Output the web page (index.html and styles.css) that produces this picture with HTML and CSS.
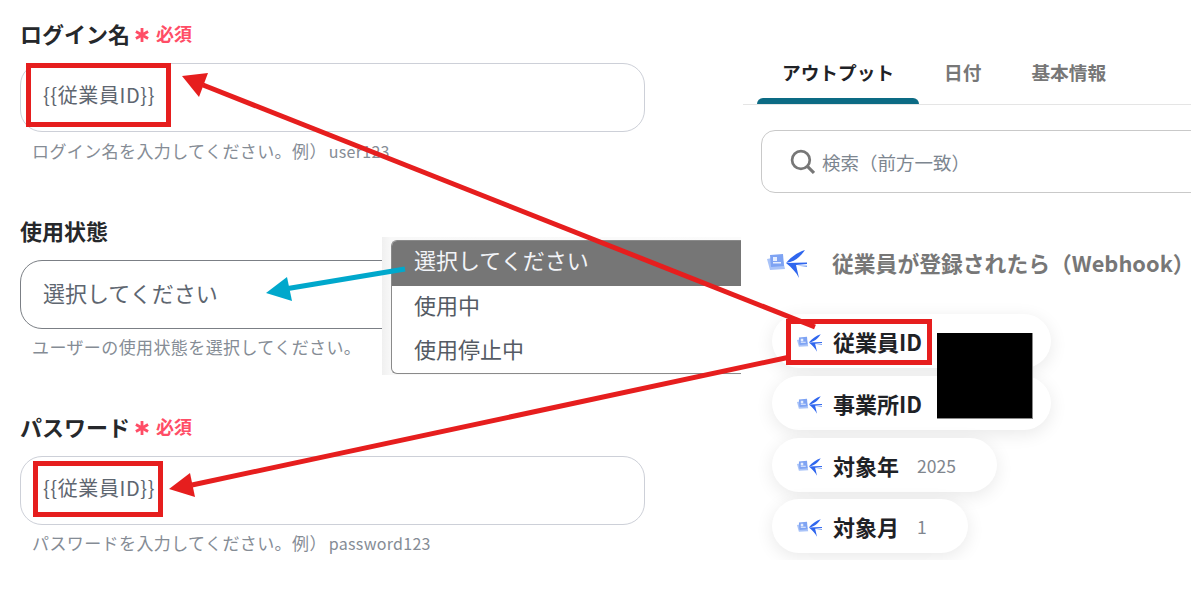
FILE: index.html
```html
<!DOCTYPE html>
<html lang="ja">
<head>
<meta charset="utf-8">
<title>従業員ID マッピング</title>
<link rel="stylesheet" href="styles.css">
</head>
<body>
<svg class="defs" width="0" height="0" aria-hidden="true">
  <symbol id="bird" viewBox="0 0 40 28">
    <path d="M0 9 15 6 18 19 3 20Z" fill="#a9c3f8"/>
    <path d="M3 5 16 4 17 16 4 17Z" fill="#7ea3f3"/>
    <path d="M6 7h4v4H6zM6 12h8v1.500H6z" fill="#e6eefe"/>
    <path d="M38 0C31 2 24 7 19 13 25 12 29 10 32 7 34 5 36 3 38 0Z" fill="#2f66ee"/>
    <path d="M19 13 40 12.500 40 14 29 15 32 28C29 22 25 18 19 13Z" fill="#2f66ee"/>
    <path d="M30 15.500 40 17 40 15.500Z" fill="#7ea3f3"/>
  </symbol>
  <symbol id="star" viewBox="0 0 15 15">
    <path d="M7.500 0V15M1 3.700 14 11.300M14 3.700 1 11.300" stroke="#ff4d66" stroke-width="3" fill="none"/>
  </symbol>
</svg>
<main class="page">
  <section class="form">
    <div class="field">
      <div class="label">ログイン名<span class="req"><svg class="star"><use href="#star"/></svg>必須</span></div>
      <div class="input">{{従業員ID}}</div>
      <p class="hint">ログイン名を入力してください。例）<span class="latin">user123</span></p>
    </div>
    <div class="field mid">
      <div class="label">使用状態</div>
      <div class="input select">選択してください</div>
      <p class="hint">ユーザーの使用状態を選択してください。</p>
    </div>
    <div class="field last">
      <div class="label">パスワード<span class="req"><svg class="star"><use href="#star"/></svg>必須</span></div>
      <div class="input">{{従業員ID}}</div>
      <p class="hint">パスワードを入力してください。例）<span class="latin">password123</span></p>
    </div>
  </section>
  <section class="output">
    <nav class="tabs">
      <span class="tab active">アウトプット</span>
      <span class="tab">日付</span>
      <span class="tab">基本情報</span>
    </nav>
    <div class="search">
      <svg class="search-icon" viewBox="0 0 24 24" width="25" height="25"><circle cx="10.500" cy="10.500" r="8.500" fill="none" stroke="#777" stroke-width="2.600"/><path d="M16.500 16.500 23 23" stroke="#777" stroke-width="3" fill="none"/></svg>
      <span>検索（前方一致）</span>
    </div>
    <h2 class="trigger"><svg class="icon-lg"><use href="#bird"/></svg><span class="trigger-text">従業員が登録されたら（Webhook<span class="half">）</span></span></h2>
    <ul class="pills">
      <li class="pill wide"><svg class="icon-sm"><use href="#bird"/></svg><b>従業員ID</b></li>
      <li class="pill wide"><svg class="icon-sm"><use href="#bird"/></svg><b>事業所ID</b></li>
      <li class="pill"><svg class="icon-sm"><use href="#bird"/></svg><b>対象年</b><span class="val">2025</span></li>
      <li class="pill"><svg class="icon-sm"><use href="#bird"/></svg><b>対象月</b><span class="val">1</span></li>
    </ul>
  </section>
</main>

<div class="dropdown">
  <ul class="menu">
    <li class="opt on">選択してください</li>
    <li class="opt">使用中</li>
    <li class="opt">使用停止中</li>
  </ul>
</div>

<div class="mark m1"></div>
<div class="mark m2"></div>
<div class="mark m3"></div>
<div class="redact"></div>

<svg class="arrows" viewBox="0 0 1191 601" width="1191" height="601" aria-hidden="true">
  <path d="M815 327 203 85" stroke="#e61e1e" stroke-width="5" fill="none"/>
  <path d="M182 76 208 73 199 97Z" fill="#e61e1e"/>
  <path d="M790 357 192 485" stroke="#e61e1e" stroke-width="5" fill="none"/>
  <path d="M169 489 190 473 195 497Z" fill="#e61e1e"/>
  <path d="M405 269 285 289" stroke="#00a8cc" stroke-width="5" fill="none"/>
  <path d="M266 293 287 277 292 301Z" fill="#00a8cc"/>
</svg>
</body>
</html>
```
FILE: styles.css
```css
* { box-sizing: border-box; }
html, body { margin: 0; padding: 0; background: #fff; }
body {
  position: relative;
  width: 1191px;
  height: 601px;
  overflow: hidden;
  font-family: "Noto Sans CJK JP", "Noto Sans", sans-serif;
}
.defs { position: absolute; }
ul { list-style: none; margin: 0; padding: 0; }
.page { display: flex; height: 601px; }

/* left form */
.form { width: 743px; padding: 18px 0 0 20px; display: flex; flex-direction: column; gap: 26px; flex: none; }
.field { height: 170px; }
.field.mid { margin-top: 1px; }
.label {
  display: flex;
  align-items: center;
  height: 30px;
  font-size: 22px;
  line-height: 30px;
  font-weight: 700;
  color: #26282b;
  margin-bottom: 15px;
}
.req { display: inline-flex; align-items: center; color: #ff4d66; font-size: 18px; margin-left: 5px; }
.star { width: 14px; height: 14px; margin: 4px 7px 0 0; flex: none; }
.input {
  width: 625px;
  height: 69px;
  display: flex;
  align-items: center;
  padding: 0 0 6px 22px;
  border: 1px solid #cdd0d8;
  border-radius: 22px;
  font-size: 20px;
  letter-spacing: .6px;
  color: #5e6670;
}
.select { border-color: #7b7f85; font-size: 22px; letter-spacing: 0; }
.hint { margin: 8px 0 0 12px; font-size: 17px; letter-spacing: .4px; line-height: 22px; color: #858c95; white-space: nowrap; }
.mid .hint, .last .hint { margin-top: 7px; }
.latin { margin-left: 2px; font-size: 16px; letter-spacing: .3px; }

/* right panel */
.output { flex: 1; min-width: 0; height: 560px; overflow: hidden; }
.tabs { display: flex; height: 105px; padding: 53px 0 0 14px; border-bottom: 1px solid #e5e5e5; }
.tab { display: block; height: 51px; padding: 0 25px; font-size: 18.700px; line-height: 38px; font-weight: 700; color: #777; white-space: nowrap; }
.tab.active { width: 162px; color: #1f2226; }
.tab.active::after {
  content: "";
  display: block;
  height: 6px;
  margin: 7px -25px 0;
  background: #0c6b84;
  border-radius: 6px 6px 0 0;
}
.search {
  display: flex;
  align-items: center;
  gap: 7px;
  height: 63px;
  margin: 25px -30px 0 18px;
  padding-left: 28px;
  border: 1px solid #c9c9c9;
  border-radius: 14px;
  font-size: 18.500px;
  color: #7d8690;
}
.search-icon { flex: none; }
.trigger {
  display: flex;
  align-items: center;
  height: 28px;
  margin: 57px 0 0 24px;
  font-size: 21.800px;
  font-weight: 700;
  color: #777;
  white-space: nowrap;
}
.trigger-text { margin-bottom: 4px; }
.half { font-feature-settings: "halt"; }
.icon-lg { width: 40px; height: 28px; margin-right: 25px; flex: none; }
.pills { display: flex; flex-direction: column; align-items: flex-start; gap: 8px; margin: 36px 0 0 29px; }
.pill {
  display: flex;
  align-items: center;
  height: 54px;
  padding: 0 41px 0 25px;
  background: #fff;
  border-radius: 27px;
  box-shadow: 0 4px 18px rgba(0, 0, 0, .09);
}
.pill:last-child { margin-top: -1px; }
.pill.wide { width: 279px; }
.pill b { font-size: 22px; font-weight: 700; color: #1f2226; }
.icon-sm { width: 25px; height: 18px; margin: 4px 11px 0 0; flex: none; }
.val { margin-left: 18px; font-size: 17.500px; color: #80868e; }

/* overlays */
.dropdown {
  position: absolute;
  left: 382px;
  top: 237px;
  width: 359px;
  height: 138px;
  padding: 3px 0 1px 9px;
  background: linear-gradient(90deg, #f0f0f0, #f8f8f8 9px, #fbfbfb);
}
.menu { height: 134px; background: #fff; border: 1px solid #8a8a8a; border-width: 1px 0 1px 1px; border-radius: 6px 0 0 6px; overflow: hidden; }
.opt { height: 44px; padding-left: 22px; font-size: 22px; line-height: 36px; color: #555b64; }
.opt.on { height: 45px; background: #767676; color: #f2f4f8; }
.mark { position: absolute; border: 5px solid #e61e1e; }
.m1 { left: 26px; top: 63px; width: 145px; height: 64px; }
.m2 { left: 33px; top: 461px; width: 130px; height: 56px; }
.m3 { left: 786px; top: 319px; width: 146px; height: 46px; }
.redact { position: absolute; left: 937px; top: 333px; width: 96px; height: 86px; background: #000; border: solid #8a8a8a; border-width: 0 1px 1px 0; }
.arrows { position: absolute; left: 0; top: 0; pointer-events: none; }
```
